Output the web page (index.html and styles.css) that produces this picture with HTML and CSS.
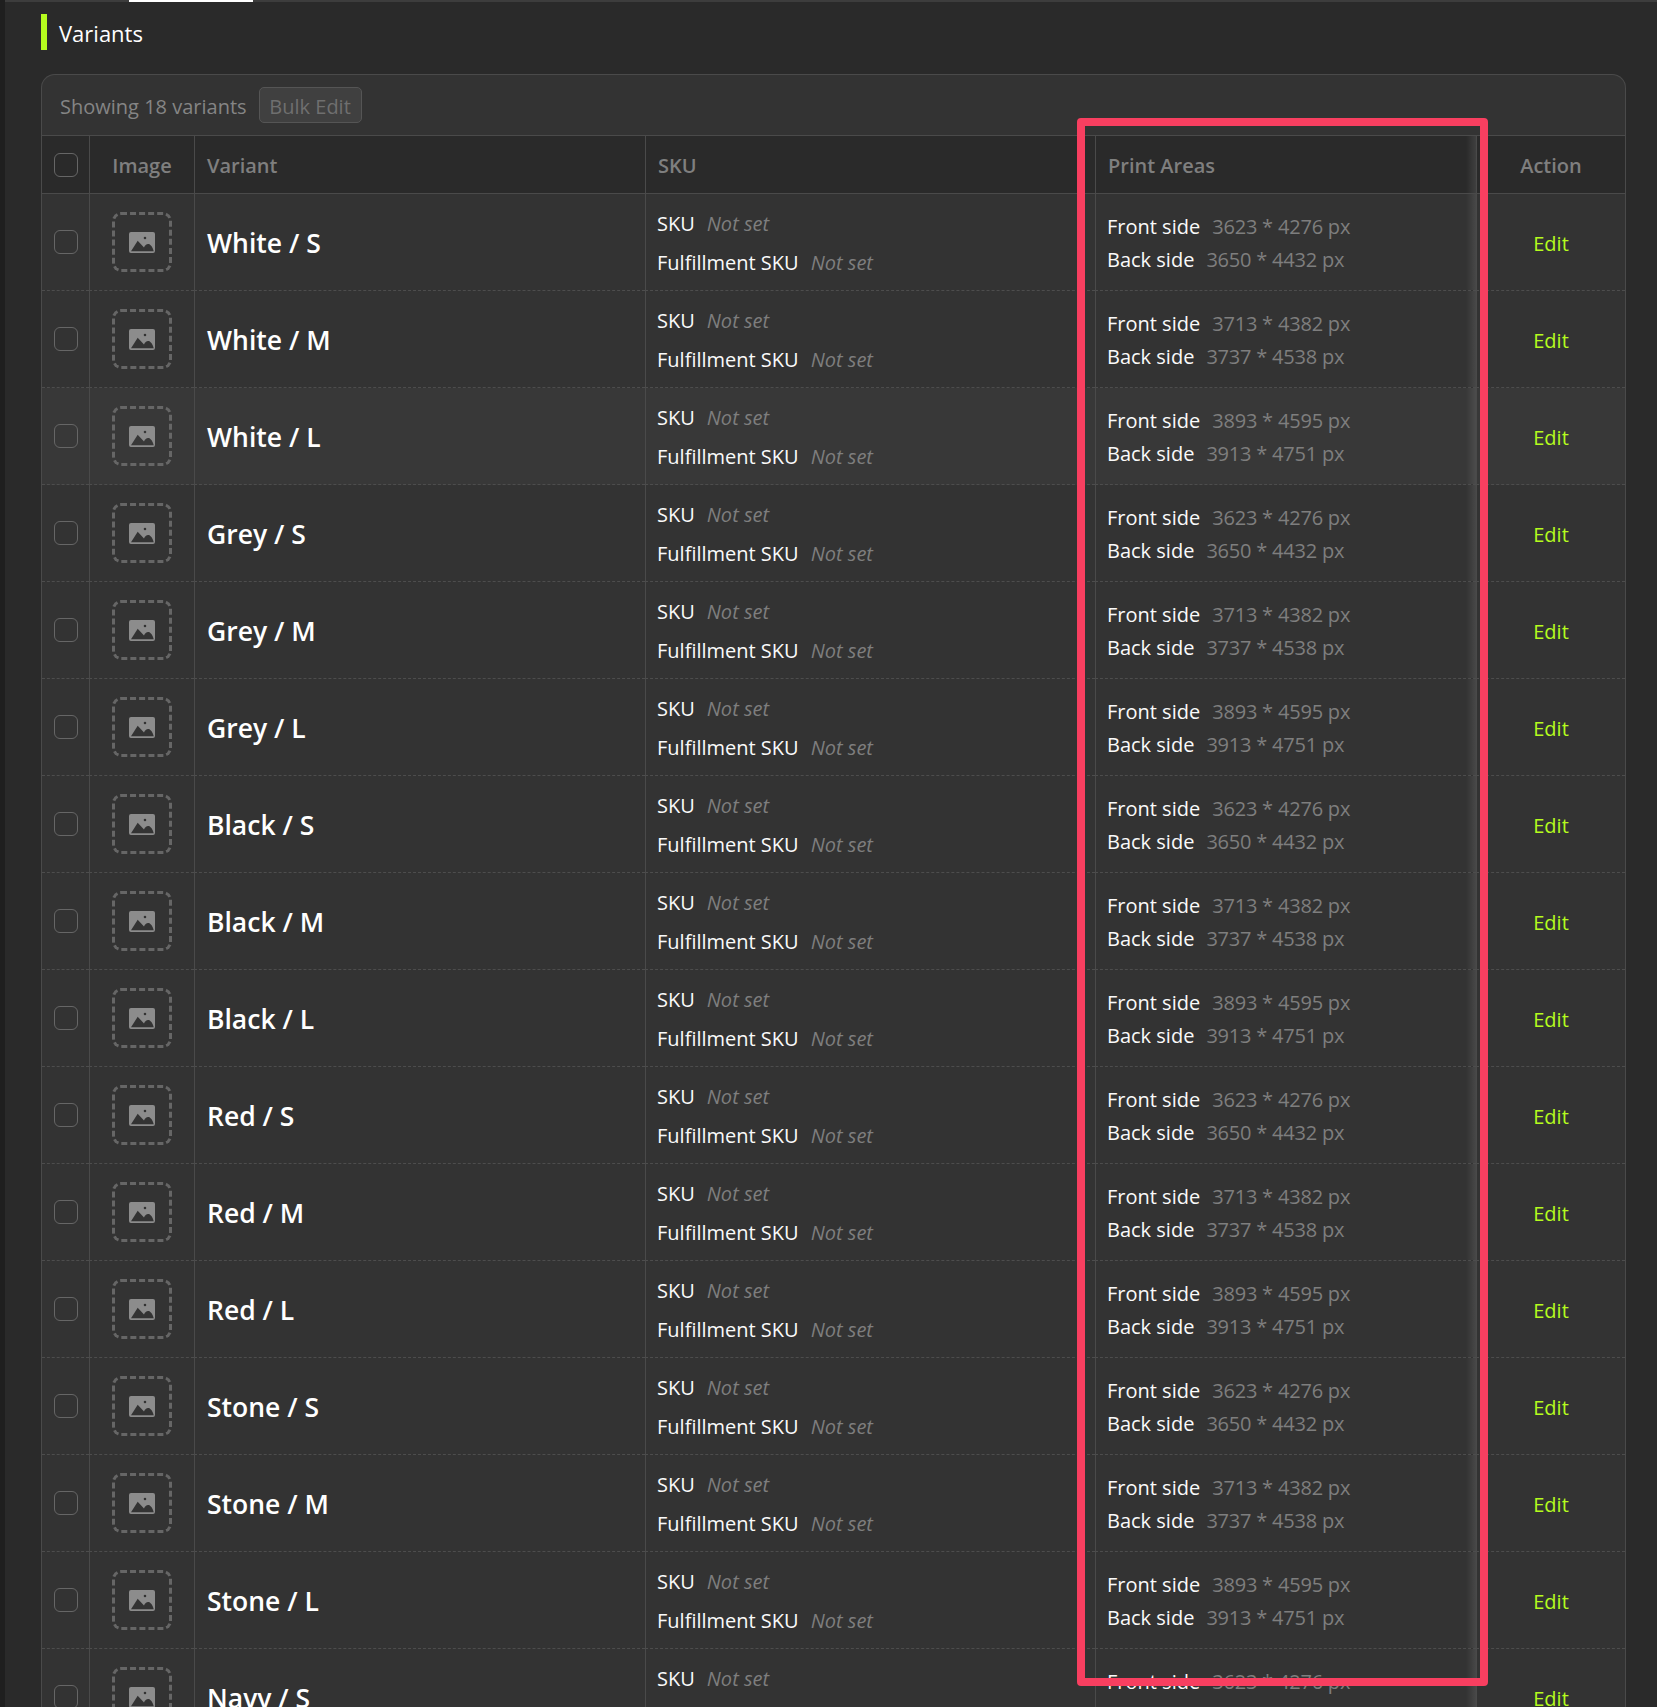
FILE: index.html
```html
<!DOCTYPE html>
<html lang="en">
<head>
    <meta charset="UTF-8">
    <meta name="viewport" content="width=device-width, initial-scale=1.0">
    <title>Variants</title>
    <link rel="stylesheet" href="styles.css">
</head>
<body>
    <div class="top-bar"><span class="top-tab"></span></div>
    <div class="page">
        <h2 class="section-title">Variants</h2>
        <div class="card">
            <div class="toolbar">
                <span class="showing">Showing 18 variants</span>
                <button class="bulk-button">Bulk Edit</button>
            </div>
            <table class="variants">
                <colgroup>
                    <col class="col-check"><col class="col-image"><col class="col-variant">
                    <col class="col-sku"><col class="col-areas"><col class="col-action">
                </colgroup>
                <thead>
                    <tr>
                        <th><span class="checkbox"></span></th>
                        <th class="center">Image</th>
                        <th>Variant</th>
                        <th>SKU</th>
                        <th>Print Areas</th>
                        <th class="center action-cell">Action</th>
                    </tr>
                </thead>
                <tbody id="variant-rows"></tbody>
            </table>
        </div>
    </div>
    <div class="highlight-box"></div>

    <script>
        const colors = ['White', 'Grey', 'Black', 'Red', 'Stone', 'Navy'];
        const sizes = [
            { name: 'S', front: '3623 * 4276 px', back: '3650 * 4432 px' },
            { name: 'M', front: '3713 * 4382 px', back: '3737 * 4538 px' },
            { name: 'L', front: '3893 * 4595 px', back: '3913 * 4751 px' }
        ];
        const imageIcon = `
            <svg class="image-icon" viewBox="0 0 26 21">
                <path fill-rule="evenodd" d="M2 0h22a2 2 0 0 1 2 2v17a2 2 0 0 1-2 2H2a2 2 0 0 1-2-2V2a2 2 0 0 1 2-2zM2 19.300L8.700 8.700 15 15.500C16 13 18 11.500 19.700 12 22 12.500 24 16 24.700 19.300zM16 4.700a1.300 1.300 0 1 0 0 2.600 1.300 1.300 0 0 0 0-2.600z"/>
            </svg>`;

        const rows = [];
        colors.forEach((color) => {
            sizes.forEach((size) => rows.push({ name: `${color} / ${size.name}`, front: size.front, back: size.back }));
        });

        document.getElementById('variant-rows').innerHTML = rows.map((row, index) => `
            <tr class="${index === 2 ? 'hovered' : ''}">
                <td><span class="checkbox"></span></td>
                <td class="center"><span class="image-slot">${imageIcon}</span></td>
                <td class="variant-name">${row.name}</td>
                <td class="sku-cell">
                    <div class="sku-line"><span class="label">SKU</span><em class="not-set">Not set</em></div>
                    <div class="sku-line"><span class="label">Fulfillment SKU</span><em class="not-set">Not set</em></div>
                </td>
                <td class="areas-cell">
                    <div class="area-line"><span class="label">Front side</span><span class="size">${row.front}</span></div>
                    <div class="area-line"><span class="label">Back side</span><span class="size">${row.back}</span></div>
                </td>
                <td class="center action-cell"><a class="edit-link" href="#">Edit</a></td>
            </tr>
        `).join('');
    </script>
</body>
</html>
```

FILE: styles.css
```css
html, body {
    height: 100%;
}
body {
    margin: 0;
    overflow: hidden;
    background-color: #2a2a2a;
    border-left: 5px solid #1f1f1f;
    box-sizing: border-box;
    font-family: "Open Sans", "Liberation Sans", sans-serif;
    font-size: 20px;
    color: #fff;
}
.top-bar {
    height: 2px;
    margin-left: -5px;
    background: #3d3d3d;
}
.top-tab {
    display: block;
    width: 124px;
    height: 2px;
    margin-left: 129px;
    background: #fff;
}
.page {
    padding: 12px 31px 0 36px;
}
.section-title {
    height: 36px;
    margin: 0 0 24px;
    padding-left: 12px;
    border-left: 6px solid #b5fb1e;
    font-size: 22px;
    font-weight: 400;
    line-height: 38px;
}
.card {
    border: 1px solid #4a4a4a;
    border-bottom: none;
    border-radius: 14px 14px 0 0;
    background: #333;
}
.toolbar {
    display: flex;
    align-items: center;
    gap: 12px;
    box-sizing: border-box;
    height: 60px;
    padding: 0 18px;
}
.showing {
    padding-top: 2px;
    color: #858585;
}
.bulk-button {
    width: 103px;
    height: 36px;
    padding: 2px 0 0;
    border: 1px solid #555;
    border-radius: 5px;
    background: #404040;
    color: #6f6f6f;
    font: inherit;
}
.variants {
    width: 100%;
    border-collapse: separate;
    border-spacing: 0;
    table-layout: fixed;
}
.col-check { width: 47px; }
.col-image { width: 105px; }
.col-variant { width: 451px; }
.col-sku { width: 450px; }
.col-areas { width: 381px; }
.col-action { width: 149px; }
.variants th, .variants td {
    box-sizing: border-box;
    padding: 0 12px;
    border-left: 1px solid #4a4a4a;
    text-align: left;
}
.variants th:first-child, .variants td:first-child {
    border-left: none;
}
.variants th {
    height: 59px;
    padding-top: 1px;
    border-top: 1px solid #4a4a4a;
    border-bottom: 1px solid #4a4a4a;
    background: #2a2a2a;
    color: #7f7f7f;
    font-weight: 600;
}
.variants td {
    height: 97px;
    border-bottom: 1px dashed #4d4d4d;
}
.variants .center {
    text-align: center;
}
.variants .sku-cell, .variants .areas-cell {
    padding-top: 1px;
    padding-left: 11px;
}
.variants td.variant-name, .variants td.action-cell {
    padding-top: 2px;
}
.hovered td {
    background: #383838;
}
.checkbox {
    display: block;
    box-sizing: border-box;
    width: 24px;
    height: 24px;
    border: 1px solid #666;
    border-radius: 6px;
}
.image-slot {
    display: flex;
    align-items: center;
    justify-content: center;
    box-sizing: border-box;
    width: 60px;
    height: 60px;
    margin: 0 auto;
    border: 3px dashed #666;
    border-radius: 9px;
}
.image-icon {
    width: 26px;
    height: 21px;
    fill: #8c8c8c;
}
.variant-name {
    font-size: 26.500px;
    font-weight: 600;
}
.sku-line {
    line-height: 39px;
}
.area-line {
    line-height: 33px;
}
.label {
    margin-right: 12px;
    color: #fafafa;
}
.not-set, .size {
    color: #7e7e7e;
}
.size {
    letter-spacing: -0.2px;
}
.action-cell {
    position: relative;
}
.action-cell::before {
    content: "";
    position: absolute;
    top: 0;
    bottom: 0;
    left: -11px;
    width: 10px;
    background: linear-gradient(to right, rgba(255, 255, 255, 0), rgba(255, 255, 255, 0.1));
}
.edit-link {
    color: #b5fb1e;
    text-decoration: none;
}
.highlight-box {
    position: absolute;
    top: 118px;
    left: 1077px;
    box-sizing: border-box;
    width: 411px;
    height: 1568px;
    border: 8px solid #f83f60;
    border-radius: 4px;
}
```
